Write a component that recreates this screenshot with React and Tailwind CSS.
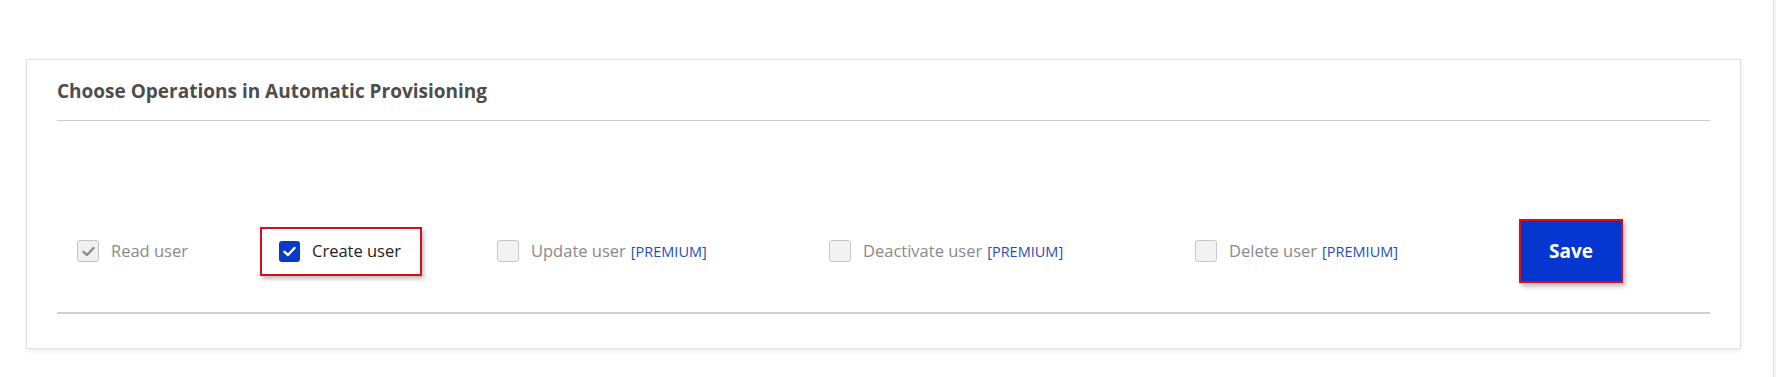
import React from 'react';

function Check({ color }) {
  return (
    <svg width="13" height="11" viewBox="0 0 13 11" fill="none">
      <path d="M1.5 5.8 L5 9 L11.5 2" stroke={color} strokeWidth="2.4" strokeLinecap="round" strokeLinejoin="round" />
    </svg>
  );
}

function Box({ state }) {
  if (state === 'on') {
    return (
      <span className="flex h-[21px] w-[21px] shrink-0 items-center justify-center rounded-[3px] bg-[#0a38c8]">
        <Check color="#ffffff" />
      </span>
    );
  }
  if (state === 'locked') {
    return (
      <span className="flex h-[22px] w-[22px] shrink-0 items-center justify-center rounded-[3px] border border-[#c4c4c4] bg-[#f0f0f0]">
        <Check color="#8d8d8d" />
      </span>
    );
  }
  return <span className="h-[22px] w-[22px] shrink-0 rounded-[3px] border border-[#c8c8c8] bg-[#f2f2f2]" />;
}

function Option({ label, state, premium, width }) {
  return (
    <div className={`flex shrink-0 items-center gap-3 ${width}`}>
      <Box state={state} />
      <span className="text-[16.5px] text-[#8a8a8a]">
        {label}
        {premium && <span className="ml-[5px] text-[14.5px] text-[#1f4db5]">[PREMIUM]</span>}
      </span>
    </div>
  );
}

export default function App() {
  return (
    <div className="flex min-h-screen bg-white" style={{ fontFamily: '"Open Sans", "Noto Sans", sans-serif' }}>
      <div className="flex-1 pl-[26px] pt-[59px]">
        <div className="w-[1715px] border border-[#e2e2e2] bg-white px-[30px] shadow-[0_2px_5px_rgba(0,0,0,0.08)]">
          {/* heading */}
          <div className="border-b border-[#cccccc] pb-[17px] pt-[19px]">
            <h2 className="text-[19px] font-bold leading-[24px] text-[#4d4d4d]">Choose Operations in Automatic Provisioning</h2>
          </div>

          {/* operations */}
          <div className="flex items-center pb-[29px] pl-[20px] pt-[98px]">
            <Option label="Read user" state="locked" width="w-[183px]" />
            <div className="w-[237px] shrink-0">
              <div className="flex h-[49px] w-[162px] items-center gap-3 border-2 border-[#d40f1c] pl-[17px] shadow-[2px_3px_4px_rgba(0,0,0,0.25)]">
                <Box state="on" />
                <span className="text-[16.5px] text-[#222222]">Create user</span>
              </div>
            </div>
            <Option label="Update user" state="off" premium width="w-[332px]" />
            <Option label="Deactivate user" state="off" premium width="w-[366px]" />
            <Option label="Delete user" state="off" premium width="w-[324px]" />
            <button className="flex h-[64px] w-[104px] items-center justify-center border-2 border-[#d40f1c] bg-[#0536cf] text-[19px] font-bold text-white shadow-[2px_3px_5px_rgba(0,0,0,0.3)]">
              Save
            </button>
          </div>

          <div className="border-t-2 border-[#d0d0d0]" />
          <div className="h-[34px]" />
        </div>
      </div>
      <div className="w-[3px] border-l border-[#e2e2e2] bg-[#f7f7f7]" />
    </div>
  );
}
